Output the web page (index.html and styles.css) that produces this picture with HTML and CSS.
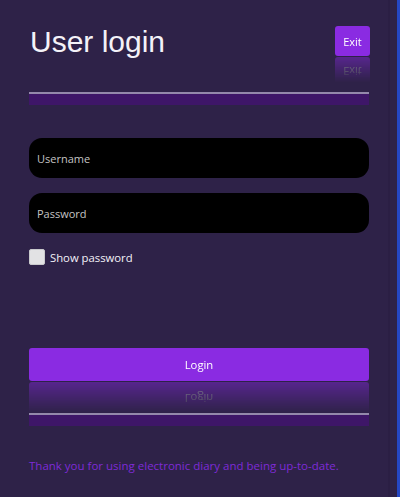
FILE: index.html
```html
<!DOCTYPE html>
<html>
<head>
<meta charset="utf-8">
<link rel="stylesheet" href="styles.css">
</head>
<body>
<div class="app">
  <header class="header">
    <h1 class="title">User login</h1>
    <button class="btn btn-exit">Exit</button>
  </header>
  <div class="divider"></div>
  <form class="form">
    <input class="field" type="text" placeholder="Username">
    <input class="field field-pass" type="password" placeholder="Password">
    <label class="check">
      <span class="box"></span>
      <span class="check-label">Show password</span>
    </label>
    <button class="btn btn-login" type="button">Login</button>
    <div class="divider divider-low"></div>
  </form>
  <p class="footer">Thank you for using electronic diary and being up-to-date.</p>
</div>
</body>
</html>
```

FILE: styles.css
```css
html, body {
  margin: 0;
  padding: 0;
}
body {
  width: 400px;
  height: 497px;
  overflow: hidden;
  background: linear-gradient(to right, #2e2248 0, #2e2248 388px, #2b1f44 388px, #2b1f44 390px, #2e2248 390px, #2e2248 397px, #2547c4 397px);
  font-family: "Open Sans", "Noto Sans", sans-serif;
  font-size: 11px;
  color: #fff;
}
.app {
  width: 340px;
  padding: 26px 0 0 29px;
}
.header {
  display: flex;
  justify-content: space-between;
  align-items: flex-start;
  height: 30px;
}
.title {
  margin: 0;
  padding-left: 1px;
  font-family: "Liberation Sans", Arial, sans-serif;
  font-weight: normal;
  font-size: 30px;
  line-height: 32px;
  color: #f4f2f8;
}
.btn {
  border: none;
  background: #8a2be2;
  color: #fff;
  font-family: "Open Sans", "Noto Sans", sans-serif;
  font-size: 11px;
  border-radius: 3px;
  padding: 0;
  cursor: pointer;
}
.btn-exit {
  width: 35px;
  height: 30px;
  margin-right: -1px;
  -webkit-box-reflect: below 1px linear-gradient(transparent 15%, rgba(255, 255, 255, 0.45));
}
.divider {
  margin-top: 36px;
  height: 11px;
  border-top: 2px solid #9489ab;
  background: #3e1668;
}
.form {
  display: flex;
  flex-direction: column;
  margin-top: 33px;
}
.field {
  box-sizing: border-box;
  height: 40px;
  width: 340px;
  border: none;
  border-radius: 13px;
  background: #000;
  color: #fff;
  padding: 0 8px;
  font-family: "Open Sans", "Noto Sans", sans-serif;
  font-size: 11px;
  outline: none;
}
.field::placeholder {
  color: #c4c4c4;
}
.field-pass {
  margin-top: 15px;
}
.check {
  display: flex;
  align-items: center;
  gap: 5px;
  margin-top: 16px;
  height: 16px;
}
.box {
  box-sizing: border-box;
  width: 16px;
  height: 16px;
  border-radius: 2px;
  background: #e2e2e4;
  border: 1px solid #c9c9cc;
}
.check-label {
  color: #f4f2f8;
  font-size: 11.3px;
}
.btn-login {
  margin-top: 83px;
  height: 33px;
  width: 340px;
  font-size: 11.3px;
  -webkit-box-reflect: below 1px linear-gradient(transparent 5%, rgba(255, 255, 255, 0.45));
}
.divider-low {
  margin-top: 32px;
}
.footer {
  margin: 33px 0 0;
  color: #7e2bd6;
  font-size: 11.5px;
  line-height: 14px;
  white-space: nowrap;
}
```
